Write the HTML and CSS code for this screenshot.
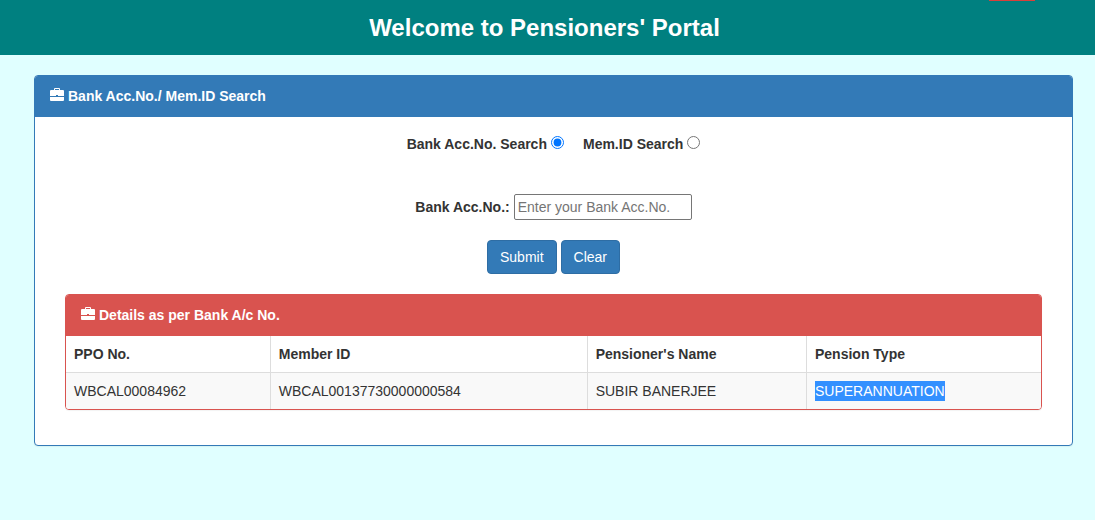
FILE: index.html
```html
<!DOCTYPE html>
<html lang="en">
<head>
<meta charset="utf-8">
<meta name="viewport" content="width=device-width, initial-scale=1">
<title>Pensioners' Portal</title>
<link rel="stylesheet" href="styles.css">
</head>
<body>
<header class="banner">
  <h1 class="banner-title">Welcome to Pensioners' Portal</h1>
  <span class="banner-tab"></span>
</header>
<main class="content">
  <section class="panel">
    <h2 class="panel-heading">
      <svg class="icon" viewBox="0 0 14 14" aria-hidden="true"><path fill="currentColor" fill-rule="evenodd" d="M4 2V1Q4 0 5 0H9Q10 0 10 1V2H13Q14 2 14 3V8H8V7H6V8H0V3Q0 2 1 2ZM5 2H9V1H5ZM0 9H14V12Q14 13 13 13H1Q0 13 0 12Z"/></svg>
      <span>Bank Acc.No./ Mem.ID Search</span>
    </h2>
    <form class="panel-body">
      <div class="choices">
        <label class="choice">Bank Acc.No. Search <input class="radio" type="radio" name="mode" checked></label>
        <label class="choice">Mem.ID Search <input class="radio" type="radio" name="mode"></label>
      </div>
      <div class="field">
        <label class="label" for="account">Bank Acc.No.:</label>
        <input class="text-input" id="account" type="text" placeholder="Enter your Bank Acc.No.">
      </div>
      <div class="actions">
        <button class="btn" type="button">Submit</button>
        <button class="btn" type="reset">Clear</button>
      </div>
      <section class="panel panel-danger">
        <h2 class="panel-heading">
          <svg class="icon" viewBox="0 0 14 14" aria-hidden="true"><path fill="currentColor" fill-rule="evenodd" d="M4 2V1Q4 0 5 0H9Q10 0 10 1V2H13Q14 2 14 3V8H8V7H6V8H0V3Q0 2 1 2ZM5 2H9V1H5ZM0 9H14V12Q14 13 13 13H1Q0 13 0 12Z"/></svg>
          <span>Details as per Bank A/c No.</span>
        </h2>
        <table class="table">
          <colgroup><col class="col-ppo"><col class="col-member"><col class="col-name"><col class="col-type"></colgroup>
          <thead>
            <tr><th>PPO No.</th><th>Member ID</th><th>Pensioner's Name</th><th>Pension Type</th></tr>
          </thead>
          <tbody>
            <tr><td>WBCAL00084962</td><td>WBCAL00137730000000584</td><td>SUBIR BANERJEE</td><td><span class="selected">SUPERANNUATION</span></td></tr>
          </tbody>
        </table>
      </section>
    </form>
  </section>
</main>
</body>
</html>
```
FILE: styles.css
```css
* {
  box-sizing: border-box;
}

body {
  margin: 0;
  background: #e0ffff;
  color: #333;
  font: 14px/20px "Liberation Sans", Arial, sans-serif;
}

.banner {
  position: relative;
  padding: 15px 20px 14px 14px;
  background: #008080;
  color: #fff;
  text-align: center;
}

.banner-title {
  margin: 0;
  font-size: 24px;
  line-height: 26px;
}

.banner-tab {
  position: absolute;
  top: 0;
  right: 60px;
  width: 46px;
  height: 1px;
  background: #d9403b;
}

.content {
  padding: 20px 22px 20px 34px;
}

.panel {
  border: 1px solid #337ab7;
  border-radius: 4px;
  background: #fff;
  box-shadow: 0 1px 1px rgba(0, 0, 0, 0.05);
  overflow: hidden;
}

.panel-heading {
  display: flex;
  align-items: center;
  gap: 4px;
  margin: 0;
  padding: 10px 15px 11px;
  background: #337ab7;
  color: #fff;
  font-size: 14px;
  line-height: 20px;
}

.icon {
  width: 14px;
  height: 14px;
  margin-bottom: 2px;
}

.panel-body {
  padding: 17px 30px 35px;
}

.choices,
.field,
.actions {
  display: flex;
  flex-wrap: wrap;
  align-items: center;
  justify-content: center;
}

.choices {
  gap: 19px;
  margin-bottom: 40px;
  font-weight: bold;
}

.choice {
  display: flex;
  align-items: center;
  gap: 4px;
}

.radio {
  width: 13px;
  height: 13px;
  margin: 0 0 3px;
}

.field {
  gap: 4px;
  margin-bottom: 20px;
}

.label {
  font-weight: bold;
}

.text-input {
  width: 178px;
  height: 26px;
  padding: 1px 3px;
  border: 1px solid #767676;
  border-radius: 2px;
  color: #333;
  font: inherit;
}

.text-input::placeholder {
  color: #757575;
}

.actions {
  gap: 4px;
  margin-bottom: 20px;
}

.btn {
  padding: 6px 12px;
  border: 1px solid #2e6da4;
  border-radius: 4px;
  background: #337ab7;
  color: #fff;
  font: inherit;
}

.panel-danger {
  border-color: #d9534f;
}

.panel-danger .panel-heading {
  background: #d9534f;
}

.table {
  width: 100%;
  border-collapse: separate;
  border-spacing: 0;
  table-layout: fixed;
}

.col-ppo {
  width: 21%;
}

.col-member {
  width: 32.5%;
}

.col-name {
  width: 22.5%;
}

.col-type {
  width: 24%;
}

.table th,
.table td {
  padding: 8px;
  border-right: 1px solid #ddd;
  text-align: left;
}

.table th {
  border-bottom: 1px solid #ddd;
}

.table th:last-child,
.table td:last-child {
  border-right: 0;
}

.table td {
  background: #f9f9f9;
}

.selected {
  display: inline-block;
  background: #3390ff;
  color: #fff;
  vertical-align: top;
}
```
